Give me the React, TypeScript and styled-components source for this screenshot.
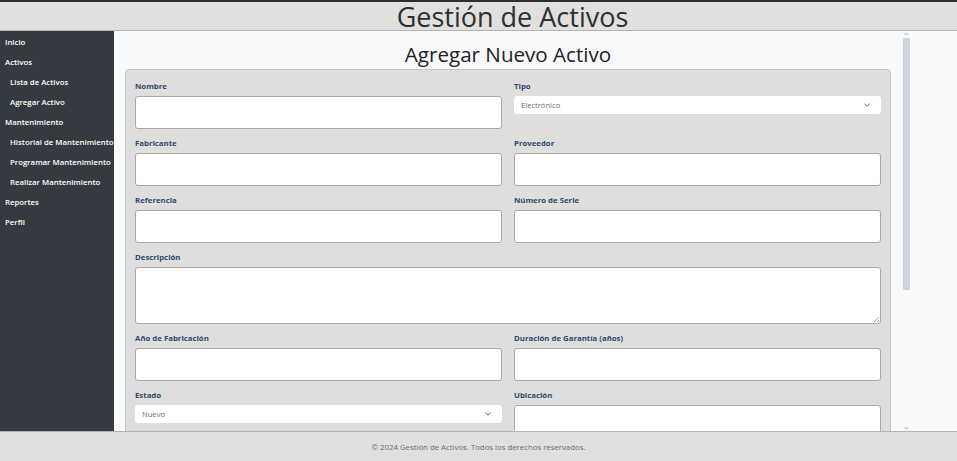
import styled, { createGlobalStyle } from 'styled-components';

const GlobalStyle = createGlobalStyle`
  html, body {
    margin: 0;
    padding: 0;
    height: 100%;
    overflow: hidden;
    background: #f8f9fa;
    font-family: "Open Sans", "Noto Sans", sans-serif;
  }
  #root {
    height: 100%;
  }
  * {
    box-sizing: border-box;
  }
`;

const navItems = [
  { label: 'Inicio', sub: false },
  { label: 'Activos', sub: false },
  { label: 'Lista de Activos', sub: true },
  { label: 'Agregar Activo', sub: true },
  { label: 'Mantenimiento', sub: false },
  { label: 'Historial de Mantenimiento', sub: true },
  { label: 'Programar Mantenimiento', sub: true },
  { label: 'Realizar Mantenimiento', sub: true },
  { label: 'Reportes', sub: false },
  { label: 'Perfil', sub: false },
];

export default function App() {
  return (
    <Page>
      <GlobalStyle />
      <Header>
        <Title>Gestión de Activos</Title>
      </Header>
      <Body>
        <Sidebar>
          {navItems.map(item => (
            <NavItem key={item.label} $sub={item.sub}>{item.label}</NavItem>
          ))}
        </Sidebar>
        <Main>
          <Content>
            <PageTitle>Agregar Nuevo Activo</PageTitle>
            <Card>
              <Field>
                <Label>Nombre</Label>
                <Input />
              </Field>
              <Field>
                <Label>Tipo</Label>
                <Select>
                  <span>Electrónico</span>
                  <Chevron />
                </Select>
              </Field>
              <Field>
                <Label>Fabricante</Label>
                <Input />
              </Field>
              <Field>
                <Label>Proveedor</Label>
                <Input />
              </Field>
              <Field>
                <Label>Referencia</Label>
                <Input />
              </Field>
              <Field>
                <Label>Número de Serie</Label>
                <Input />
              </Field>
              <Field $wide>
                <Label>Descripción</Label>
                <TextArea />
              </Field>
              <Field>
                <Label>Año de Fabricación</Label>
                <Input />
              </Field>
              <Field>
                <Label>Duración de Garantía (años)</Label>
                <Input />
              </Field>
              <Field>
                <Label>Estado</Label>
                <Select>
                  <span>Nuevo</span>
                  <Chevron />
                </Select>
              </Field>
              <Field>
                <Label>Ubicación</Label>
                <Input />
              </Field>
            </Card>
          </Content>
          <ScrollTrack>
            <ScrollArrow viewBox="0 0 7 5">
              <path d="M1.5 3.5 L3.5 1.5 L5.5 3.5" fill="none" stroke="#8a8f95" strokeWidth="0.8" />
            </ScrollArrow>
            <ScrollRail>
              <ScrollThumb />
            </ScrollRail>
            <ScrollArrow viewBox="0 0 7 5">
              <path d="M1.5 1.5 L3.5 3.5 L5.5 1.5" fill="none" stroke="#8a8f95" strokeWidth="0.8" />
            </ScrollArrow>
          </ScrollTrack>
        </Main>
      </Body>
      <Footer>© 2024 Gestión de Activos. Todos los derechos reservados.</Footer>
    </Page>
  );
}

function Chevron() {
  return (
    <svg width="8" height="6" viewBox="0 0 8 6">
      <path d="M1.5 1.8 L4 4.2 L6.5 1.8" fill="none" stroke="#555" strokeWidth="0.9" />
    </svg>
  );
}

const Page = styled.div`
  height: 100vh;
  display: flex;
  flex-direction: column;
`

const Header = styled.header`
  height: 31px;
  flex-shrink: 0;
  background: #e0e0de;
  border-top: 2px solid #2d2d2d;
  border-bottom: 1px solid #b4b4b4;
  display: flex;
  justify-content: center;
  align-items: center;
  padding-left: 68px;
`

const Title = styled.h1`
  margin: 0;
  font-size: 27px;
  font-weight: 400;
  line-height: 27px;
  color: #2f2f2f;
`

const Body = styled.div`
  height: calc(100vh - 61px);
  display: flex;
  overflow: hidden;
`

const Sidebar = styled.nav`
  width: 114px;
  flex-shrink: 0;
  background: #343a40;
  padding-top: 1px;
  display: flex;
  flex-direction: column;
`

const NavItem = styled.div<{ $sub: boolean }>`
  height: 20px;
  line-height: 20px;
  padding-left: ${props => props.$sub ? '10px' : '5px'};
  font-size: 7.8px;
  font-weight: 600;
  color: #ffffff;
  white-space: nowrap;
`

const Main = styled.main`
  flex: 1;
  min-width: 0;
  background: #f8f9fa;
  display: flex;
`

const Content = styled.div`
  width: 789px;
  height: 100%;
  overflow: hidden;
  padding: 0 12px 0 11px;
`

const ScrollTrack = styled.div`
  width: 7px;
  height: 100%;
  display: flex;
  flex-direction: column;
  align-items: stretch;
`

const ScrollArrow = styled.svg`
  width: 7px;
  height: 6px;
  flex-shrink: 0;
`

const ScrollRail = styled.div`
  flex: 1;
  padding-top: 1px;
`

const ScrollThumb = styled.div`
  height: 252px;
  background: #cdd6df;
  border-radius: 1px;
`

const PageTitle = styled.h2`
  margin: 9px 0 0;
  line-height: 29px;
  text-align: center;
  font-size: 20.6px;
  font-weight: 400;
  color: #222;
`

const Card = styled.form`
  background: #dededc;
  border: 1px solid #c2c2c0;
  border-radius: 4px;
  padding: 10px 9px 12px;
  display: grid;
  grid-template-columns: 1fr 1fr;
  column-gap: 12px;
  row-gap: 8px;
`

const Field = styled.div<{ $wide?: boolean }>`
  grid-column: ${props => props.$wide ? '1 / span 2' : 'auto'};
  display: flex;
  flex-direction: column;
  align-items: stretch;
`

const Label = styled.label`
  font-size: 7.8px;
  font-weight: 700;
  line-height: 12px;
  color: #2c4a6e;
  margin-bottom: 4px;
`

const Input = styled.div`
  height: 33px;
  background: #ffffff;
  border: 1px solid #a9a9a9;
  border-radius: 3px;
`

const TextArea = styled.div`
  height: 57px;
  background: #ffffff;
  border: 1px solid #a9a9a9;
  border-radius: 3px;
  position: relative;

  &::after {
    content: '';
    position: absolute;
    right: 1px;
    bottom: 1px;
    width: 5px;
    height: 5px;
    background: linear-gradient(135deg, transparent 45%, #aaa 45%, #aaa 55%, transparent 55%, transparent 75%, #aaa 75%, #aaa 85%, transparent 85%);
  }
`

const Select = styled.div`
  height: 18px;
  background: #ffffff;
  border-radius: 3px;
  padding: 0 10px 0 7px;
  display: flex;
  justify-content: space-between;
  align-items: center;
  font-size: 7.6px;
  color: #6c6c6c;
`

const Footer = styled.footer`
  height: 30px;
  flex-shrink: 0;
  background: #e0e0de;
  border-top: 1px solid #b4b4b4;
  display: flex;
  justify-content: center;
  align-items: center;
  font-size: 7.8px;
  color: #6a6a6a;
`
